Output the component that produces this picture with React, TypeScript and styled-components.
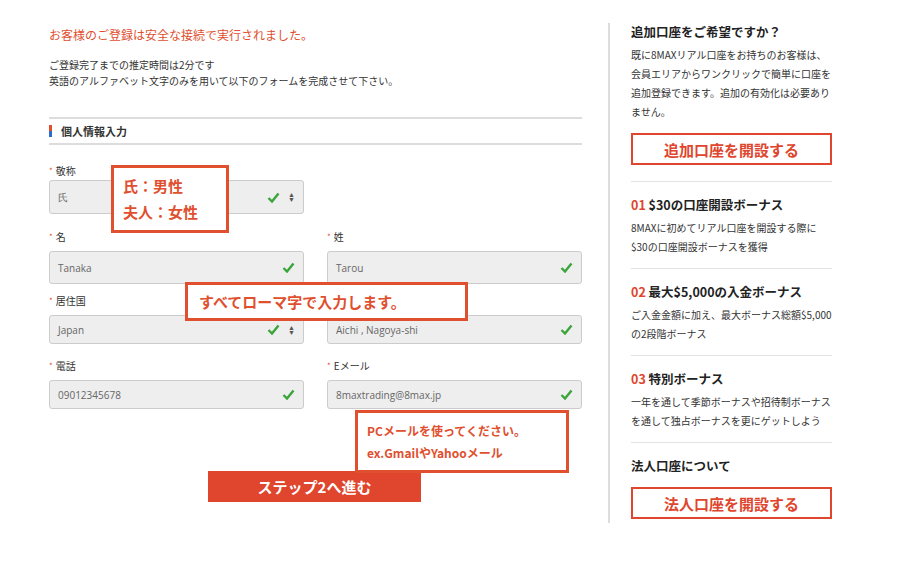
import React from "react";
import styled, { createGlobalStyle } from "styled-components";

const G = createGlobalStyle`
  body{margin:0;background:#fff;font-family:"Noto Sans CJK JP","Noto Sans",sans-serif;color:#333;}
`;
const Page = styled.div`display:flex;width:902px;height:576px;position:relative;`;
const Left = styled.div`width:533px;margin-left:49px;padding-top:25px;`;
const Notice = styled.div`color:#e0502f;font-size:12px;line-height:20px;`;
const Intro = styled.div`margin-top:12px;font-size:10px;line-height:16px;`;
const Section = styled.div`margin-top:28px;border-top:2px solid #ddd;border-bottom:2px solid #ddd;height:24px;display:flex;align-items:center;gap:9px;font-size:11px;font-weight:700;`;
const Mark = styled.span`width:3px;height:12px;background:linear-gradient(#e0502f 50%,#2d6bd1 50%);`;
const Row = styled.div`display:grid;grid-template-columns:255px 255px;gap:23px;margin-top:${p=>p.$mt}px;`;
const Label = styled.div`font-size:10px;line-height:14px;height:14px;& b{color:#e0502f;font-weight:400;margin-right:3px;font-size:8px;vertical-align:top;}`;
const Field = styled.div`margin-top:${p=>p.$mt ?? 7}px;height:${p=>p.$h ?? 32}px;border:1px solid #ccc;border-radius:3px;background:#eee;display:flex;align-items:center;padding:0 8px;font-size:10px;color:#666;font-family:"Open Sans",sans-serif;box-sizing:border-box;`;
const Val = styled.span`flex:1;`;
const Check = () => <svg width="13" height="11" viewBox="0 0 13 11"><path d="M1.5 6l3.5 3.5 6.5-8" stroke="#3aa53a" strokeWidth="2.4" fill="none"/></svg>;
const Arrows = styled.span`margin-left:8px;font-size:7px;line-height:5px;display:flex;flex-direction:column;color:#555;`;
const Submit = styled.div`margin:62px 0 0 159px;width:213px;height:31px;background:#e0452d;color:#fff;font-weight:700;font-size:15px;display:flex;align-items:center;justify-content:center;`;
const Divider = styled.div`width:2px;background:#ddd;height:500px;margin:23px 0 0 26px;`;
const Right = styled.div`width:201px;margin-left:21px;padding-top:22px;`;
const H = styled.div`font-size:12.5px;font-weight:700;line-height:20px;color:#222;& span{color:#e0452d;}`;
const P = styled.div`font-size:10px;line-height:19px;margin-top:3px;`;
const OBtn = styled.div`margin-top:${p=>p.$mt}px;height:28px;border:2px solid #e0452d;color:#e0452d;font-weight:700;font-size:15px;display:flex;align-items:center;justify-content:center;`;
const Block = styled.div`border-top:1px solid #e3e3e3;margin-top:${p=>p.$mt}px;padding-top:13px;`;
const Callout = styled.div`position:absolute;border:3px solid #e0502f;background:#fff;color:#e0502f;font-weight:700;display:flex;flex-direction:column;justify-content:center;padding:0 9px;box-sizing:border-box;`;

export default function App(){
  return <Page><G/>
    <Left>
      <Notice>お客様のご登録は安全な接続で実行されました。</Notice>
      <Intro>ご登録完了までの推定時間は2分です<br/>英語のアルファベット文字のみを用いて以下のフォームを完成させて下さい。</Intro>
      <Section><Mark/>個人情報入力</Section>
      <Row $mt={19}><div><Label><b>*</b>敬称</Label><Field $mt={2} $h={34}><Val>氏</Val><Check/><Arrows><span>▲</span><span>▼</span></Arrows></Field></div></Row>
      <Row $mt={16}>
        <div><Label><b>*</b>名</Label><Field $h={33}><Val>Tanaka</Val><Check/></Field></div>
        <div><Label><b>*</b>姓</Label><Field $h={33}><Val>Tarou</Val><Check/></Field></div>
      </Row>
      <Row $mt={10}>
        <div><Label><b>*</b>居住国</Label><Field $h={29}><Val>Japan</Val><Check/><Arrows><span>▲</span><span>▼</span></Arrows></Field></div>
        <div><Label><b>*</b></Label><Field $h={29}><Val>Aichi , Nagoya-shi</Val><Check/></Field></div>
      </Row>
      <Row $mt={15}>
        <div><Label><b>*</b>電話</Label><Field $h={29}><Val>09012345678</Val><Check/></Field></div>
        <div><Label><b>*</b>Eメール</Label><Field $h={29}><Val>8maxtrading@8max.jp</Val><Check/></Field></div>
      </Row>
      <Submit>ステップ2へ進む</Submit>
    </Left>
    <Divider/>
    <Right>
      <H>追加口座をご希望ですか？</H>
      <P>既に8MAXリアル口座をお持ちのお客様は、会員エリアからワンクリックで簡単に口座を追加登録できます。追加の有効化は必要ありません。</P>
      <OBtn $mt={12}>追加口座を開設する</OBtn>
      <Block $mt={16}><H><span>01</span> $30の口座開設ボーナス</H><P>8MAXに初めてリアル口座を開設する際に<br/>$30の口座開設ボーナスを獲得</P></Block>
      <Block $mt={12}><H><span>02</span> 最大$5,000の入金ボーナス</H><P>ご入金金額に加え、最大ボーナス総額$5,000の2段階ボーナス</P></Block>
      <Block $mt={12}><H><span>03</span> 特別ボーナス</H><P>一年を通して季節ボーナスや招待制ボーナスを通して独占ボーナスを更にゲットしよう</P></Block>
      <Block $mt={12}><H>法人口座について</H><OBtn $mt={11}>法人口座を開設する</OBtn></Block>
    </Right>
    <Callout style={{left:111,top:165,width:118,height:68,fontSize:15,lineHeight:"26px"}}><span>氏：男性</span><span>夫人：女性</span></Callout>
    <Callout style={{left:185,top:282,width:283,height:39,fontSize:15,paddingLeft:11}}>すべてローマ字で入力します。</Callout>
    <Callout style={{left:355,top:410,width:214,height:63,fontSize:12,lineHeight:"22px"}}><span>PCメールを使ってください。</span><span>ex.GmailやYahooメール</span></Callout>
  </Page>;
}
